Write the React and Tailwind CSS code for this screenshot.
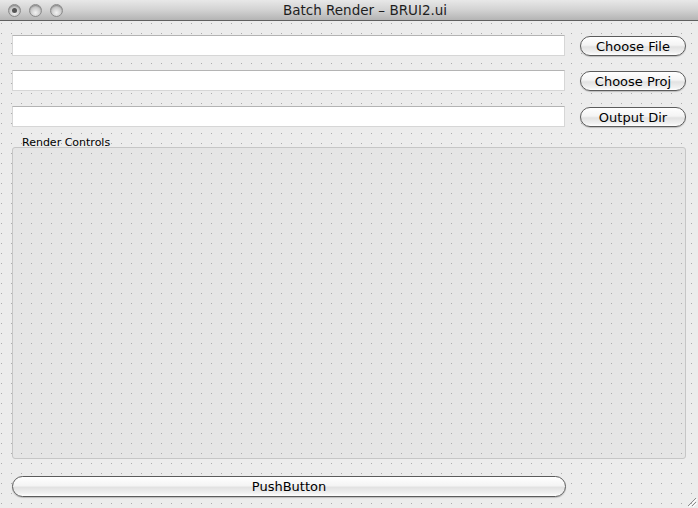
import React from "react";

const dots =
  "bg-fixed bg-[length:10px_10px] bg-[radial-gradient(circle_at_1.5px_3.5px,#acacac_0.55px,transparent_0.85px)]";

const TrafficLight = ({ active }) => (
  <div className="w-[13px] h-[13px] rounded-full border border-[#8a8a8a] bg-[radial-gradient(circle_at_50%_70%,#f2f2f2,#c4c4c4_60%,#a9a9a9)] flex items-center justify-center shadow-[inset_0_1px_1px_rgba(0,0,0,0.25)]">
    {active && <div className="w-[5px] h-[5px] rounded-full bg-[#555]" />}
  </div>
);

const AquaButton = ({ children, className = "" }) => (
  <button
    className={`rounded-full border border-[#5c5c5c] bg-[linear-gradient(#ffffff,#f4f4f4_45%,#e2e2e2_55%,#f0f0f0_85%,#ffffff)] shadow-[0_1px_1px_rgba(0,0,0,0.2)] text-[13px] leading-none text-black flex items-center justify-center ${className}`}
  >
    {children}
  </button>
);

const Field = () => (
  <div className="h-[21px] bg-white border border-[#d6d6d6] border-t-[#b4b4b4]" />
);

const rows = [
  { label: "Choose File", gap: "" },
  { label: "Choose Proj", gap: "mt-[14px]" },
  { label: "Output Dir", gap: "mt-[15px]" },
];

export default function App() {
  return (
    <div
      className={`w-[698px] h-[508px] relative flex flex-col bg-[#ececec] overflow-hidden ${dots}`}
      style={{ fontFamily: '"DejaVu Sans", "Liberation Sans", sans-serif' }}
    >
      {/* title bar */}
      <div className="h-[21px] shrink-0 relative flex items-center justify-center bg-[linear-gradient(#e8e8e8,#d2d2d2_50%,#b4b4b4)] border-b border-[#5f5f5f]">
        <div className="absolute left-[8px] top-[4px] flex gap-[8px]">
          <TrafficLight active />
          <TrafficLight />
          <TrafficLight />
        </div>
        <span className="text-[13.5px] text-[#1e1e1e] pt-[1px] pl-[32px]">Batch Render – BRUI2.ui</span>
      </div>

      <div className="flex-1 flex flex-col pl-[12px] pr-[12px] pt-[14px]">
        {rows.map((r) => (
          <div key={r.label} className={`flex items-start h-[21px] ${r.gap}`}>
            <div className="w-[553px]">
              <Field />
            </div>
            <AquaButton className="ml-[15px] w-[106px] h-[20px] mt-[1px]">{r.label}</AquaButton>
          </div>
        ))}

        <div className="relative mt-[20px] h-[312px]">
          <span className="absolute left-[10px] -top-[10px] text-[11px] leading-none text-black">
            Render Controls
          </span>
          <div className={`h-full rounded-[3px] border border-[#c6c6c6] bg-[#e5e5e5] ${dots}`} />
        </div>

        <AquaButton className="mt-[17px] w-[554px] h-[21px]">PushButton</AquaButton>
      </div>

      {/* resize grip */}
      <svg className="absolute right-[1px] bottom-[1px]" width="12" height="12" viewBox="0 0 12 12">
        <path d="M11 3 L3 11 M11 7 L7 11" stroke="#8c8c8c" strokeWidth="1" />
        <path d="M12 4 L4 12 M12 8 L8 12" stroke="#ffffff" strokeWidth="1" />
      </svg>
    </div>
  );
}
